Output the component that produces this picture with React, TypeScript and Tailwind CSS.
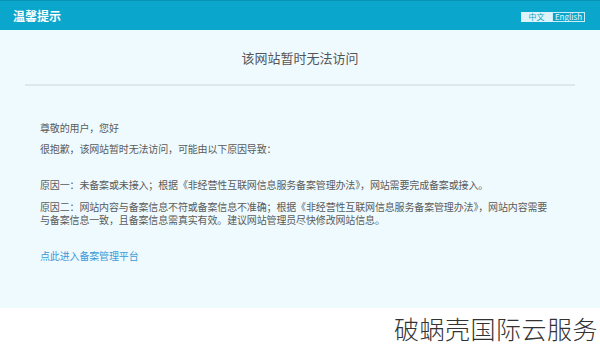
const font = { fontFamily: '"Noto Sans CJK SC", "Noto Sans", sans-serif' };

export default function App() {
  return (
    <div className="w-[600px] h-[348px] bg-white flex flex-col" style={font}>
      {/* Top bar */}
      <div className="h-[30px] bg-[#0ba6cc] border-t border-[#0893b6] flex items-center justify-between pl-[13px] pr-[15px]">
        <span className="text-[12px] font-bold text-white leading-none">温馨提示</span>
        <div className="flex items-center mt-[2px]">
          <span className="w-[31px] h-[10px] bg-[#dff3fa] text-[#0ba6cc] text-[8px] leading-[10px] text-center">中文</span>
          <span className="w-[33px] h-[10px] border border-[#c9ecf8] text-[#e8f7fc] text-[8px] leading-[8px] text-center">English</span>
        </div>
      </div>

      {/* Body */}
      <div className="h-[278px] bg-[#effaff] px-[25px]">
        <div className="pt-[20px] text-center text-[13px] leading-[16px] text-[#555]">该网站暂时无法访问</div>
        <div className="mt-[18px] h-[2px] bg-[#dde8ec]" />
        <div className="px-[15px] pt-[35px] text-[10px] leading-[14px] text-[#5a5a5a] tracking-[-0.15px]">
          <p>尊敬的用户，您好</p>
          <p className="mt-[7px]">很抱歉，该网站暂时无法访问，可能由以下原因导致：</p>
          <p className="mt-[22px]">原因一：未备案或未接入；根据《非经营性互联网信息服务备案管理办法》，网站需要完成备案或接入。</p>
          <p className="mt-[8px] leading-[13px] pr-[12px]">
            原因二：网站内容与备案信息不符或备案信息不准确；根据《非经营性互联网信息服务备案管理办法》，网站内容需要与备案信息一致，且备案信息需真实有效。建议网站管理员尽快修改网站信息。
          </p>
          <p className="mt-[23px] text-[#3b98d6]">点此进入备案管理平台</p>
        </div>
      </div>

      {/* Watermark */}
      <div className="flex-1 flex items-center justify-end pr-[2px]">
        <span className="text-[25px] leading-none text-[#333] font-light tracking-[0.5px]">破蜗壳国际云服务</span>
      </div>
    </div>
  );
}
